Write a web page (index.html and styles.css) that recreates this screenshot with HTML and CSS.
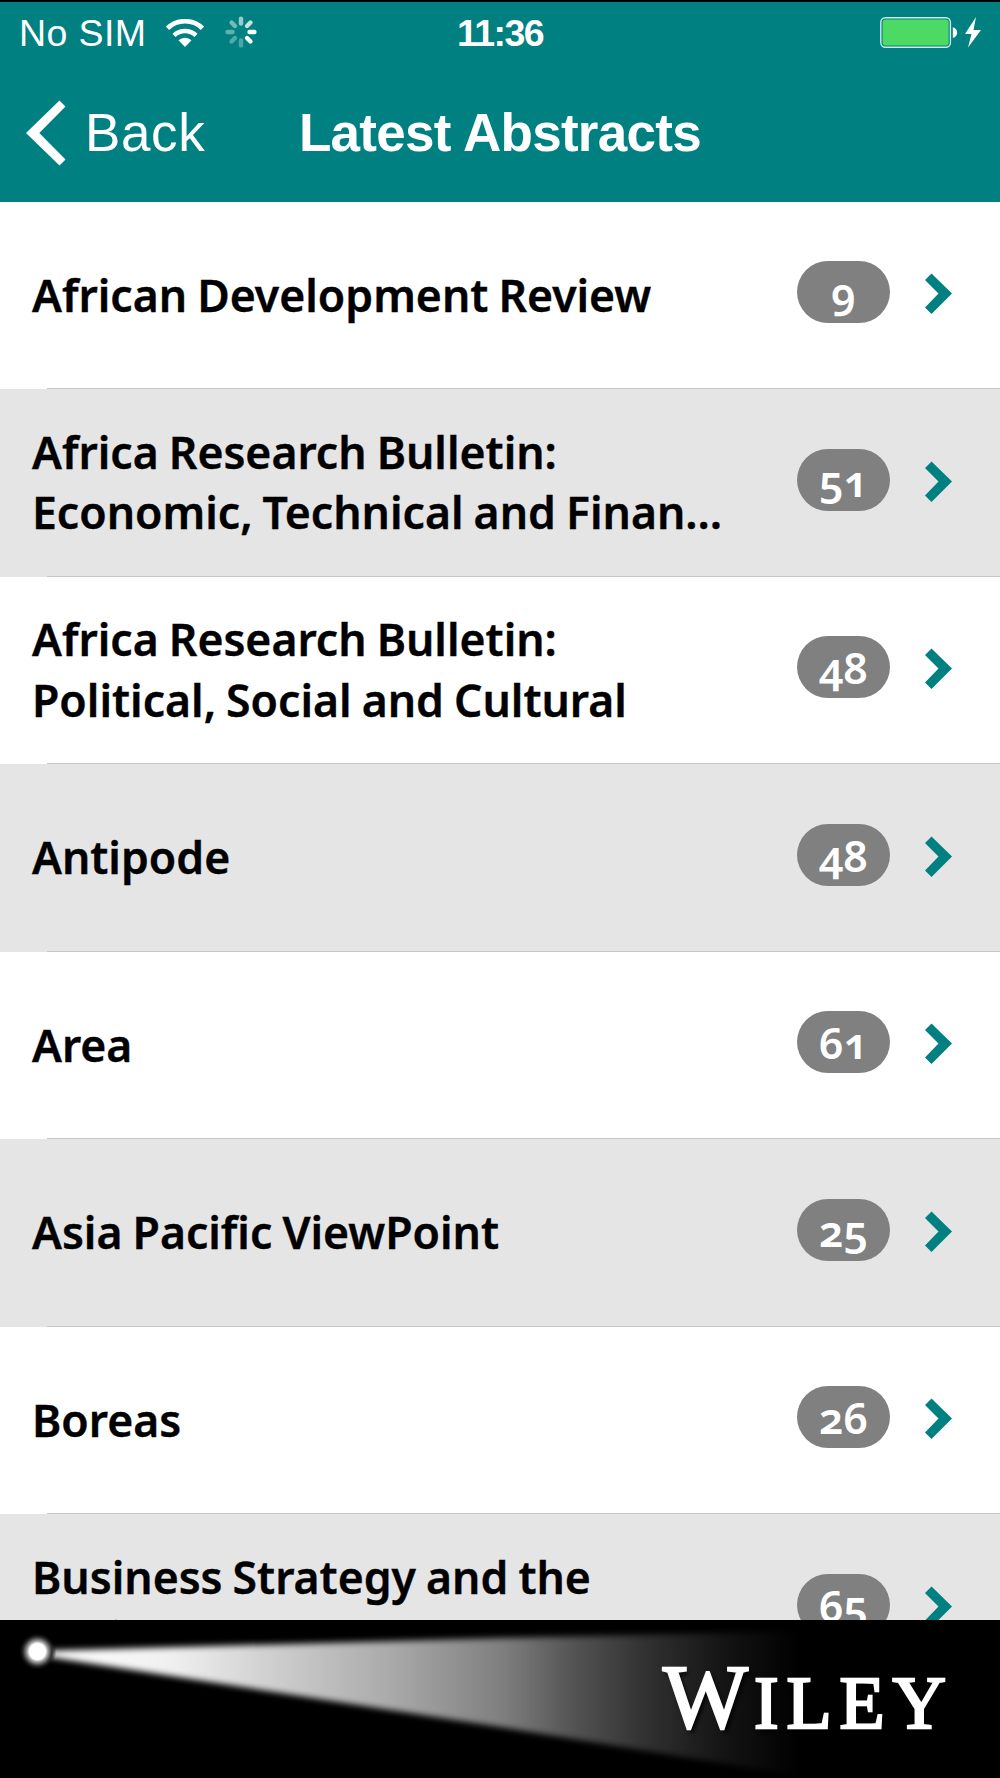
FILE: index.html
```
<!DOCTYPE html>
<html lang="en">
<head>
    <meta charset="utf-8">
    <title>Latest Abstracts</title>
    <link rel="stylesheet" href="styles.css">
</head>
<body>
    <svg width="0" height="0" class="defs">
        <symbol id="arrow" viewBox="0 0 27 41"><path d="M0 7 6.500.5 27 20.500 6.500 41 0 34.500 13.500 20.500z" fill="#008080"/></symbol>
    </svg>

    <header>
        <div class="status">
            <div class="status-left">
                <span>No SIM</span>
                <svg class="wifi" width="38" height="28" viewBox="0 0 38 28">
                    <g fill="none" stroke="#fff" stroke-width="4.600">
                        <path d="M1.500 9.300a25 25 0 0 1 35 0"/>
                        <path d="M8 16.400a16 16 0 0 1 22 0"/>
                    </g>
                    <path d="M19 28 12.500 21.300a9.500 9.500 0 0 1 13 0z" fill="#fff"/>
                </svg>
                <svg class="spinner" width="32" height="32" viewBox="-16 -16 32 32" stroke="#fff" stroke-width="4.400" stroke-linecap="round">
                    <path d="M8.500 0H13.400"/>
                    <path d="M8.500 0H13.400" transform="rotate(45)"/>
                    <path d="M8.500 0H13.400" transform="rotate(90)" opacity=".3"/>
                    <path d="M8.500 0H13.400" transform="rotate(135)" opacity=".32"/>
                    <path d="M8.500 0H13.400" transform="rotate(180)" opacity=".38"/>
                    <path d="M8.500 0H13.400" transform="rotate(225)" opacity=".46"/>
                    <path d="M8.500 0H13.400" transform="rotate(270)" opacity=".6"/>
                    <path d="M8.500 0H13.400" transform="rotate(315)" opacity=".78"/>
                </svg>
            </div>
            <div class="time">11:36</div>
            <div class="status-right">
                <svg width="101" height="31" viewBox="0 0 101 31">
                    <rect x=".8" y=".8" width="69.600" height="29.400" rx="4.500" fill="none" stroke="#cfe8e8" stroke-width="1.400"/>
                    <rect x="2.600" y="2.400" width="66" height="26.200" rx="2.800" fill="#4cd964"/>
                    <path d="M72.800 10.300c5.800 1 5.800 9.600 0 10.600z" fill="#fff"/>
                    <path d="M96 0 85 17h6.500L88 30.500 101 13h-7.500z" fill="#fff"/>
                </svg>
            </div>
        </div>
        <div class="navbar">
            <div class="back">
                <svg width="40" height="66" viewBox="0 0 40 66"><path d="M0 33 33.500.5 39.500 6.500 13.300 33 39.500 59.500 33.500 65.500z" fill="#fff"/></svg>
                <span>Back</span>
            </div>
            <h1>Latest Abstracts</h1>
        </div>
    </header>

    <ul class="list">
        <li>
            <div class="name">African Development Review</div>
            <span class="count">9</span>
            <svg class="arrow"><use href="#arrow"/></svg>
        </li>
        <li>
            <div class="name">Africa Research Bulletin:<br>Economic, Technical and Finan…</div>
            <span class="count">51</span>
            <svg class="arrow"><use href="#arrow"/></svg>
        </li>
        <li>
            <div class="name">Africa Research Bulletin:<br>Political, Social and Cultural</div>
            <span class="count">48</span>
            <svg class="arrow"><use href="#arrow"/></svg>
        </li>
        <li>
            <div class="name">Antipode</div>
            <span class="count">48</span>
            <svg class="arrow"><use href="#arrow"/></svg>
        </li>
        <li>
            <div class="name">Area</div>
            <span class="count">61</span>
            <svg class="arrow"><use href="#arrow"/></svg>
        </li>
        <li>
            <div class="name">Asia Pacific ViewPoint</div>
            <span class="count">25</span>
            <svg class="arrow"><use href="#arrow"/></svg>
        </li>
        <li>
            <div class="name">Boreas</div>
            <span class="count">26</span>
            <svg class="arrow"><use href="#arrow"/></svg>
        </li>
        <li>
            <div class="name">Business Strategy and the<br>Environment</div>
            <span class="count">65</span>
            <svg class="arrow"><use href="#arrow"/></svg>
        </li>
    </ul>

    <footer>
        <svg class="beam" width="1000" height="158" viewBox="0 0 1000 158">
            <defs>
                <linearGradient id="light" gradientUnits="userSpaceOnUse" x1="40" y1="0" x2="800" y2="0">
                    <stop offset="0" stop-color="#fff"/>
                    <stop offset=".17" stop-color="#f0f0f0"/>
                    <stop offset=".3" stop-color="#d0d0d0"/>
                    <stop offset=".46" stop-color="#aaa"/>
                    <stop offset=".61" stop-color="#7e7e7e"/>
                    <stop offset=".7" stop-color="#545454"/>
                    <stop offset=".8" stop-color="#303030"/>
                    <stop offset=".9" stop-color="#141414"/>
                    <stop offset="1" stop-color="#000"/>
                </linearGradient>
                <radialGradient id="glow">
                    <stop offset="0" stop-color="#fff"/>
                    <stop offset=".42" stop-color="#fff"/>
                    <stop offset=".56" stop-color="#999"/>
                    <stop offset=".75" stop-color="#333"/>
                    <stop offset="1" stop-color="#000" stop-opacity="0"/>
                </radialGradient>
                <filter id="soft" x="-5%" y="-20%" width="110%" height="140%" color-interpolation-filters="sRGB"><feGaussianBlur stdDeviation="3"/></filter>
            </defs>
            <path d="M36 31 500 18 800 11V156L500 107 36 35z" fill="url(#light)" filter="url(#soft)"/>
            <circle cx="37.500" cy="31.500" r="19" fill="url(#glow)"/>
        </svg>
        <div class="logo"><span>W</span>ILEY</div>
    </footer>
</body>
</html>
```
FILE: styles.css
```
body { margin: 0; height: 1778px; display: flex; flex-direction: column; overflow: hidden; background: #fff; font-family: "Liberation Sans", Arial, sans-serif; }
.defs { position: absolute; }

header { box-sizing: border-box; height: 201.5px; flex: none; border-top: 2px solid #000; background: #008080; color: #fff; }
.status { display: grid; grid-template-columns: 1fr auto 1fr; align-items: center; height: 62px; padding: 0 19px; font-size: 37.5px; }
.status-left { display: flex; align-items: center; }
.status-left span { width: 147px; line-height: 62px; letter-spacing: 0.4px; }
.wifi { margin-right: 21px; }
.spinner { margin-top: -2px; }
.time { font-weight: bold; letter-spacing: -1.6px; line-height: 62px; }
.status-right { display: flex; justify-content: flex-end; margin-top: -1px; }

.navbar { display: grid; grid-template-columns: 1fr auto 1fr; align-items: center; height: 137px; padding: 0 26px; }
.back { display: flex; align-items: center; gap: 19px; font-size: 53px; letter-spacing: 0.6px; }
.navbar h1 { margin: 0; font-size: 53px; letter-spacing: -0.7px; }

.list { list-style: none; margin: 0; padding: 0; flex: 1; min-height: 0; overflow: hidden; font-family: "Noto Sans", sans-serif; }
.list li { display: flex; align-items: center; box-sizing: border-box; height: 187.5px; padding: 0 48px 0 32px; background: linear-gradient(#c8c7cc, #c8c7cc) 47px 100% / 100% 1px no-repeat #fff; }
.list li:nth-child(even) { background-color: #e5e5e5; }
.name { flex: 1; margin-top: -1px; font-size: 44.5px; font-weight: 650; line-height: 60.5px; word-spacing: -1.5px; white-space: nowrap; -webkit-text-stroke: 0.4px #000; }
.count { width: 93px; height: 62px; margin: 0 35px 6px 0; border-radius: 31px; background: #808080; color: #fff; font-size: 43px; font-weight: 650; line-height: 63px; text-align: center; font-variant-numeric: oldstyle-nums; }
.arrow { width: 27px; height: 41px; margin-bottom: 3px; }

footer { position: relative; flex: none; height: 158px; background: #000; }
.beam { display: block; }
.logo { position: absolute; left: 663px; top: 28px; color: #fff; font: 74px/100px "Liberation Serif", serif; letter-spacing: 7.8px; -webkit-text-stroke: 2.4px #fff; text-shadow: 3px 4px 4px #000; white-space: nowrap; }
.logo span { font-size: 90px; letter-spacing: 6px; }
```
